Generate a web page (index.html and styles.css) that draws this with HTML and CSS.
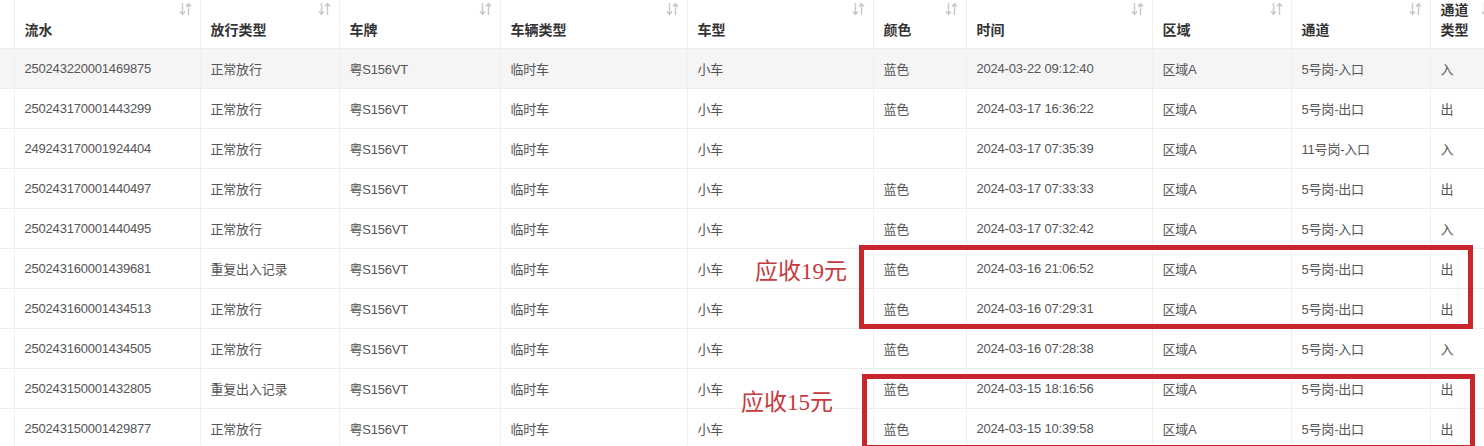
FILE: index.html
```html
<!DOCTYPE html>
<html lang="zh-CN">
<head>
  <meta charset="UTF-8" />
  <title>通行记录</title>
  <link rel="stylesheet" href="styles.css">
</head>
<body>

<div class="board">
  <table class="records">
    <colgroup>
      <col style="width:14px"><col style="width:186px"><col style="width:139px"><col style="width:161px">
      <col style="width:187px"><col style="width:186px"><col style="width:93px"><col style="width:186px">
      <col style="width:139px"><col style="width:139px"><col style="width:72px">
    </colgroup>
    <thead>
      <tr>
        <th class="edge"></th>
        <th>流水<span class="sort"></span></th>
        <th>放行类型<span class="sort"></span></th>
        <th>车牌<span class="sort"></span></th>
        <th>车辆类型<span class="sort"></span></th>
        <th>车型<span class="sort"></span></th>
        <th>颜色<span class="sort"></span></th>
        <th>时间<span class="sort"></span></th>
        <th>区域<span class="sort"></span></th>
        <th>通道<span class="sort"></span></th>
        <th>通道<br>类型<span class="sort"></span></th>
      </tr>
    </thead>
    <tbody id="rows"></tbody>
  </table>

  <div class="mark mark-a"></div>
  <div class="mark mark-b"></div>
  <div class="note note-a">应收19元</div>
  <div class="note note-b">应收15元</div>
</div>

<script>
const records = [
  ["250243220001469875", "正常放行", "粤S156VT", "临时车", "小车", "蓝色", "2024-03-22 09:12:40", "区域A", "5号岗-入口", "入"],
  ["250243170001443299", "正常放行", "粤S156VT", "临时车", "小车", "蓝色", "2024-03-17 16:36:22", "区域A", "5号岗-出口", "出"],
  ["249243170001924404", "正常放行", "粤S156VT", "临时车", "小车", "", "2024-03-17 07:35:39", "区域A", "11号岗-入口", "入"],
  ["250243170001440497", "正常放行", "粤S156VT", "临时车", "小车", "蓝色", "2024-03-17 07:33:33", "区域A", "5号岗-出口", "出"],
  ["250243170001440495", "正常放行", "粤S156VT", "临时车", "小车", "蓝色", "2024-03-17 07:32:42", "区域A", "5号岗-入口", "入"],
  ["250243160001439681", "重复出入记录", "粤S156VT", "临时车", "小车", "蓝色", "2024-03-16 21:06:52", "区域A", "5号岗-出口", "出"],
  ["250243160001434513", "正常放行", "粤S156VT", "临时车", "小车", "蓝色", "2024-03-16 07:29:31", "区域A", "5号岗-出口", "出"],
  ["250243160001434505", "正常放行", "粤S156VT", "临时车", "小车", "蓝色", "2024-03-16 07:28:38", "区域A", "5号岗-入口", "入"],
  ["250243150001432805", "重复出入记录", "粤S156VT", "临时车", "小车", "蓝色", "2024-03-15 18:16:56", "区域A", "5号岗-出口", "出"],
  ["250243150001429877", "正常放行", "粤S156VT", "临时车", "小车", "蓝色", "2024-03-15 10:39:58", "区域A", "5号岗-出口", "出"]
];

const sortIcon = '<svg width="13" height="14" viewBox="0 0 13 14"><path d="M3.5 1v11M1 9.5l2.5 3 2.5-3M9.5 13V2M7 4.5l2.5-3 2.5 3" fill="none" stroke="#c8c8c8" stroke-width="1.4"/></svg>';
document.querySelectorAll(".sort").forEach(s => s.innerHTML = sortIcon);

const body = document.getElementById("rows");
records.forEach((rec, i) => {
  const tr = document.createElement("tr");
  if (i === 0) tr.className = "current";
  tr.innerHTML = '<td class="edge"></td>' + rec.map(v => "<td>" + v + "</td>").join("");
  body.appendChild(tr);
});
</script>

</body>
</html>
```

FILE: styles.css
```css
body { margin: 0; background: #fff; font-family: "Liberation Sans", "Noto Sans CJK SC", sans-serif; }
.board { position: relative; width: 1484px; height: 446px; overflow: hidden; }
.records { border-collapse: collapse; table-layout: fixed; width: 1502px; font-size: 13px; color: #555; letter-spacing: -0.2px; }
.records th {
  position: relative; height: 46px; padding: 0 10px 8px; box-sizing: border-box;
  text-align: left; vertical-align: bottom; line-height: 20px;
  font-size: 14px; font-weight: 600; color: #333; letter-spacing: 0;
  border-right: 1px solid #f0f0f0;
}
.records td {
  height: 40px; padding: 0 10px; box-sizing: border-box;
  border-top: 1px solid #ededed; border-right: 1px solid #f0f0f0;
  white-space: nowrap; overflow: hidden;
}
.records .edge { padding: 0; }
.records tr.current td { background: #f5f5f5; }
.sort { position: absolute; top: 2px; right: 8px; line-height: 0; }
.mark { position: absolute; border: 5px solid #c9252c; box-sizing: border-box; }
.mark-a { left: 859px; top: 245px; width: 614px; height: 84px; }
.mark-b { left: 862px; top: 374px; width: 613px; height: 76px; }
.note {
  position: absolute; font-family: "Liberation Serif", "Noto Sans CJK SC", serif;
  font-size: 23px; line-height: 26px; color: #c6393d;
}
.note-a { left: 755px; top: 259px; }
.note-b { left: 741px; top: 390px; }
```
